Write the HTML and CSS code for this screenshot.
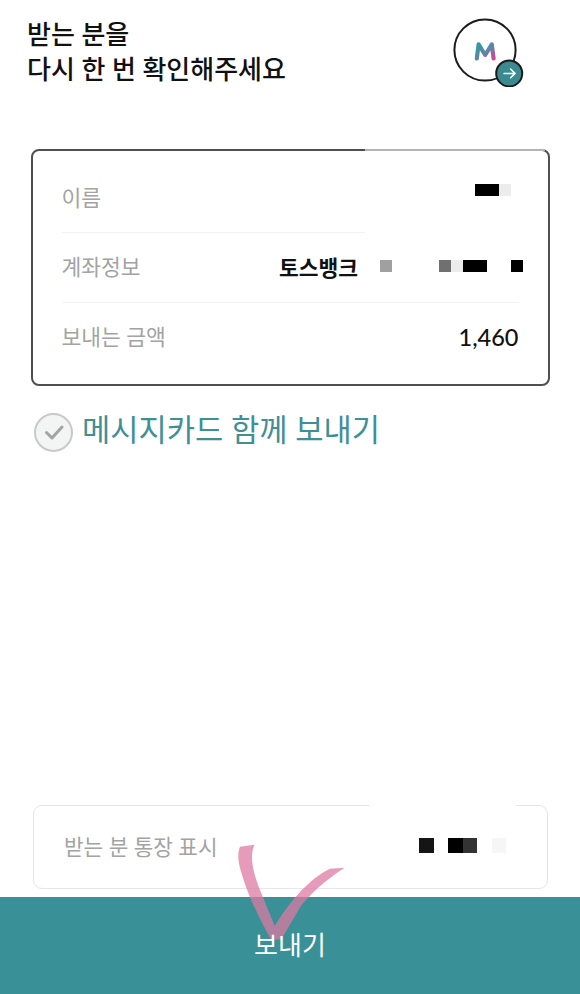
FILE: index.html
```html
<!DOCTYPE html>
<html lang="ko">
<head>
<meta charset="utf-8">
<title>보내기</title>
<link rel="stylesheet" href="styles.css">
</head>
<body>
<div class="page">
  <header class="header">
    <h1 class="title">받는 분을<br>다시 한 번 확인해주세요</h1>
    <svg class="avatar" viewBox="450 15 77 72" width="77" height="72" aria-hidden="true">
      <defs>
        <linearGradient id="mgrad" x1="0" y1="0" x2="1" y2="1">
          <stop offset="0" stop-color="#2f9c9c"/>
          <stop offset="0.55" stop-color="#5f86a6"/>
          <stop offset="1" stop-color="#d2459a"/>
        </linearGradient>
      </defs>
      <circle cx="485" cy="50" r="30.6" fill="#fff" stroke="#1b1b1b" stroke-width="2"/>
      <path d="M476.8 58.4 L478.6 44.4 L485.2 55 L491.8 44.4 L493.6 58.4" fill="none" stroke="url(#mgrad)" stroke-width="4.2" stroke-linecap="round" stroke-linejoin="round"/>
      <circle cx="509.2" cy="73.4" r="13" fill="#3a8a90" stroke="#1b1b1b" stroke-width="2"/>
      <path d="M504 73.4 H515 M510.6 69 L515 73.4 L510.6 77.8" fill="none" stroke="#fff" stroke-width="1.5" stroke-linecap="round" stroke-linejoin="round"/>
    </svg>
  </header>

  <section class="card">
    <div class="row row-first">
      <span class="label">이름</span>
      <div class="pixels pixels-name">
        <i class="px px-w2 c-black"></i><i class="px c-faint"></i>
      </div>
    </div>
    <div class="row row-second">
      <span class="label">계좌정보</span>
      <div class="account">
        <strong class="bank">토스뱅크</strong>
        <div class="pixels pixels-account">
          <i class="px c-gray"></i><i class="px gap-47 c-mid"></i><i class="px c-faint"></i><i class="px px-w2 c-black"></i><i class="px gap-24 c-black"></i>
        </div>
      </div>
    </div>
    <div class="row row-last">
      <span class="label">보내는 금액</span>
      <span class="amount">1,460</span>
    </div>
  </section>

  <div class="option">
    <span class="check">
      <svg viewBox="0 0 38 38" width="38" height="38" aria-hidden="true">
        <path d="M11.5 19.5 L17 25 L27 14" fill="none" stroke="#a3a3a3" stroke-width="3" stroke-linecap="round" stroke-linejoin="round"/>
      </svg>
    </span>
    <span class="option-text">메시지카드 함께 보내기</span>
  </div>

  <div class="bottom">
    <div class="passbook">
      <span class="passbook-label">받는 분 통장 표시</span>
      <div class="pixels pixels-passbook">
        <i class="pb c-ink"></i><i class="pb gap-14 c-black"></i><i class="pb c-dark"></i><i class="pb gap-14 c-pale"></i>
      </div>
    </div>
    <button class="send" type="button"><span class="send-text">보내기</span></button>
  </div>

  <svg class="scribble" viewBox="0 0 450 420" width="150" height="140" aria-hidden="true">
    <path d="M90 50 L134 44 C120 72 124 110 146 170 L194 288 C232 226 290 150 360 116 L404 113 C372 134 322 168 274 226 L214 328 L184 330 C150 270 112 190 98 140 C86 105 80 76 90 50 Z" fill="#dc7aa2" fill-opacity="0.75"/>
  </svg>
</div>
</body>
</html>
```

FILE: styles.css
```css
* { box-sizing: border-box; }
html, body { margin: 0; padding: 0; background: #fff; }
body { font-family: "Lato", "Noto Sans CJK KR", sans-serif; }

.page {
  position: relative;
  width: 580px;
  height: 994px;
  display: flex;
  flex-direction: column;
  overflow: hidden;
}

.header {
  height: 149px;
  padding: 17px 53px 0 27px;
  display: flex;
  justify-content: space-between;
  align-items: flex-start;
}
.title {
  margin: 0;
  font-size: 26px;
  line-height: 35px;
  font-weight: 500;
  color: #111;
  letter-spacing: 0;
}
.avatar { display: block; margin-top: -2px; }

.card {
  position: relative;
  margin: 0 30px 0 31px;
  height: 237px;
  padding: 13px 29.5px 0 28.5px;
  border: 2px solid #4f4f4f;
  border-radius: 8px;
  display: flex;
  flex-direction: column;
}
.card::before {
  content: "";
  position: absolute;
  left: 332px;
  right: 3px;
  top: -2px;
  height: 2px;
  background: #b4b4b4;
}
.row {
  position: relative;
  display: flex;
  align-items: center;
  justify-content: space-between;
  height: 69px;
}
.row-first::after {
  content: "";
  position: absolute;
  left: 0;
  bottom: 0;
  width: 303px;
  height: 1px;
  background: #f3f3f3;
}
.row-second { height: 70px; border-bottom: 1px solid #f3f3f3; }
.row-last { height: 69px; }
.label { font-size: 21.5px; color: #a3a3a3; margin-top: -5px; }

.pixels { display: flex; align-items: flex-start; }
.px { display: block; width: 12px; height: 12px; }
.px-w2 { width: 24px; }
.pixels-name { margin: -18px 7.5px 0 0; }
.account { display: flex; align-items: center; margin-right: -4px; margin-top: -2px; }
.bank { font-size: 21.5px; font-weight: 700; color: #111; }
.pixels-account { margin-left: 21.5px; margin-top: -1px; }
.gap-47 { margin-left: 47px; }
.gap-24 { margin-left: 24px; }
.amount { font-size: 23.5px; font-weight: 500; color: #111; margin-top: -2px; }

.c-black { background: #000; }
.c-faint { background: #ececec; }
.c-gray { background: #a0a0a0; }
.c-mid { background: #707070; }
.c-ink { background: #151515; }
.c-dark { background: #333; }
.c-pale { background: #f6f6f6; }

.option {
  margin: 27px 0 0 34px;
  display: flex;
  align-items: center;
  gap: 9px;
  height: 38px;
}
.check {
  width: 39px;
  height: 39px;
  border-radius: 50%;
  background: #f3f4f4;
  border: 2px solid #c9c9c9;
  display: flex;
  align-items: center;
  justify-content: center;
}
.check svg { display: block; flex: none; }
.option-text {
  font-size: 30.7px;
  line-height: 38px;
  color: #3f8f96;
  margin-top: -4px;
}

.bottom { margin-top: auto; display: flex; flex-direction: column; }
.passbook {
  position: relative;
  margin: 0 32px 8px 33px;
  height: 84px;
  padding: 0 41px 0 30px;
  border: 1.5px solid #e6e6e6;
  border-radius: 9px;
  display: flex;
  align-items: center;
  justify-content: space-between;
}
.passbook::before {
  content: "";
  position: absolute;
  left: 335px;
  width: 147px;
  top: -1.5px;
  height: 1.5px;
  background: #fff;
}
.passbook-label { font-size: 21.3px; color: #a3a3a3; margin-top: -4px; }
.pb { display: block; width: 14.5px; height: 14.5px; }
.gap-14 { margin-left: 14.5px; }
.pixels-passbook { margin-top: -3px; }

.send {
  display: block;
  width: 100%;
  height: 97px;
  border: 0;
  padding: 0 0 5px;
  background: #3a9097;
  color: #fff;
  font-family: inherit;
  font-size: 26px;
}
.send-text { position: relative; z-index: 2; }

.scribble {
  position: absolute;
  left: 210px;
  top: 830px;
  z-index: 1;
  pointer-events: none;
}
```
